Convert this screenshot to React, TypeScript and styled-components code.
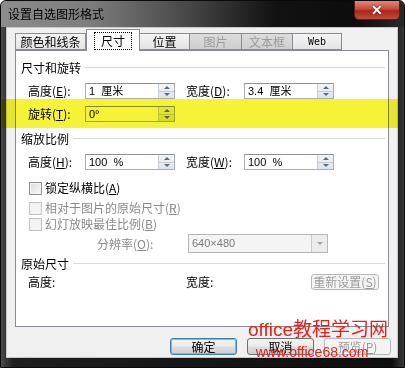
import React from "react";
import styled, { createGlobalStyle } from "styled-components";

const Global = createGlobalStyle`
  html, body { margin: 0; padding: 0; background: #fff; }
  body {
    font-family: "Noto Sans CJK SC", "Liberation Sans", sans-serif;
    font-size: 12px;
    color: #000;
  }
  #root { width: 405px; height: 368px; }
`;

const Window = styled.div`
  position: relative;
  width: 405px;
  height: 368px;
  box-sizing: border-box;
  display: flex;
  flex-direction: column;
  border: 1px solid #0a0a0a;
  border-radius: 6px 6px 0 0;
  overflow: hidden;
  background: linear-gradient(to right, #4a4a4a 0%, #1e1e1e 3%, #161616 50%, #0e0e0e 97%, #3a3a3a 100%);
`;

const TitleBar = styled.div`
  height: 26px;
  flex: none;
  display: flex;
  align-items: flex-start;
  justify-content: space-between;
  background: linear-gradient(to right, #8c8c8c 0%, #7d7d7d 22%, #4a4a4a 45%, #121212 68%, #0c0c0c 88%, #2a2a2a 100%);
`;

const Title = styled.div`
  padding: 5px 0 0 7px;
  font-size: 12px;
  line-height: 16px;
  color: #000;
`;

const CloseBtn = styled.div`
  width: 46px;
  height: 19px;
  margin-right: 4px;
  box-sizing: border-box;
  border: 1px solid #5a2020;
  border-top: none;
  border-radius: 0 0 5px 5px;
  background: linear-gradient(to bottom, #e08a7a 0%, #c74a3a 45%, #a8281c 55%, #c44a38 100%);
  display: flex;
  align-items: center;
  justify-content: center;
  color: #fff;
  font-family: "Liberation Sans", sans-serif;
  font-weight: bold;
  font-size: 14px;
  text-shadow: 0 0 2px #400;
`;

const Client = styled.div`
  margin: 0 6px 0 5px;
  height: 331px;
  flex: none;
  box-sizing: border-box;
  border: 1px solid #c8c8c8;
  background: #f0f0f0;
  display: flex;
  flex-direction: column;
`;

const TabRow = styled.div`
  height: 22px;
  flex: none;
  display: flex;
  align-items: flex-end;
  padding-left: 8px;
  position: relative;
  z-index: 2;
`;

const Tab = styled.div<{ $w: number; $active?: boolean; $disabled?: boolean }>`
  width: ${(p) => p.$w}px;
  height: ${(p) => (p.$active ? 22 : 17)}px;
  margin-bottom: ${(p) => (p.$active ? -1 : 0)}px;
  box-sizing: border-box;
  border: 1px solid #898c95;
  border-bottom: ${(p) => (p.$active ? "none" : "1px solid #898c95")};
  border-left: ${(p) => (p.$active ? "1px solid #898c95" : "none")};
  background: ${(p) =>
    p.$active
      ? "#fff"
      : p.$disabled
      ? "linear-gradient(to bottom, #dcdcdc, #cfcfcf)"
      : "linear-gradient(to bottom, #f4f4f4, #e4e4e4)"};
  color: ${(p) => (p.$disabled ? "#9a9a9a" : "#000")};
  display: flex;
  align-items: center;
  justify-content: center;
  font-size: 12px;
  line-height: 14px;
  &:first-child { border-left: 1px solid #898c95; }
`;

const Focus = styled.span`
  outline: 1px dotted #000;
  outline-offset: 1px;
  padding: 0 5px;
`;

const WebText = styled.span`
  font-family: "DejaVu Sans Mono", monospace;
  font-size: 10px;
`;

const Panel = styled.div`
  margin: 0 8px;
  height: 277px;
  flex: none;
  box-sizing: border-box;
  border: 1px solid #898c95;
  background: #fff;
  display: flex;
  flex-direction: column;
  padding-top: 9px;
  position: relative;
  z-index: 1;
`;

const Section = styled.div<{ $mt?: number }>`
  height: 14px;
  margin-top: ${(p) => p.$mt ?? 0}px;
  display: flex;
  align-items: center;
  gap: 4px;
  padding: 0 3px 0 5px;
  font-size: 12px;
  &::after {
    content: "";
    flex: 1;
    height: 1px;
    background: #d5dce3;
  }
`;

const Row = styled.div<{ $mt: number; $h: number; $pl?: number }>`
  height: ${(p) => p.$h}px;
  margin-top: ${(p) => p.$mt}px;
  padding-left: ${(p) => p.$pl ?? 12}px;
  display: flex;
  align-items: center;
`;

const Label = styled.div<{ $w: number; $ml?: number; $disabled?: boolean }>`
  width: ${(p) => p.$w}px;
  margin-left: ${(p) => p.$ml ?? 0}px;
  flex: none;
  font-size: 12px;
  line-height: 14px;
  white-space: nowrap;
  color: ${(p) => (p.$disabled ? "#8a8a8a" : "#000")};
`;

const SpinBox = styled.div`
  width: 90px;
  height: 16px;
  flex: none;
  box-sizing: border-box;
  border: 1px solid #abadb3;
  border-top-color: #8e9298;
  background: #fff;
  display: flex;
  align-items: stretch;
`;

const SpinText = styled.div`
  flex: 1;
  padding-left: 3px;
  font-size: 11px;
  line-height: 14px;
  font-family: "Liberation Sans", "Noto Sans CJK SC", sans-serif;
  white-space: pre;
`;

const SpinBtns = styled.div`
  width: 15px;
  flex: none;
  display: flex;
  flex-direction: column;
  border-left: 1px solid #c5cdd6;
  background: linear-gradient(to bottom, #f2f5f8, #dde4ec);
`;

const SpinHalf = styled.div<{ $down?: boolean }>`
  flex: 1;
  display: flex;
  align-items: center;
  justify-content: center;
  border-bottom: ${(p) => (p.$down ? "none" : "1px solid #c5cdd6")};
  &::before {
    content: "";
    width: 0;
    height: 0;
    border-left: 3px solid transparent;
    border-right: 3px solid transparent;
    ${(p) => (p.$down ? "border-top: 3px solid #5a6a7c;" : "border-bottom: 3px solid #5a6a7c;")}
  }
`;

const Spin: React.FC<{ value: string }> = ({ value }) => (
  <SpinBox>
    <SpinText>{value}</SpinText>
    <SpinBtns>
      <SpinHalf />
      <SpinHalf $down />
    </SpinBtns>
  </SpinBox>
);

const Check = styled.div<{ $disabled?: boolean }>`
  width: 13px;
  height: 13px;
  flex: none;
  box-sizing: border-box;
  border: 1px solid ${(p) => (p.$disabled ? "#c4c4c4" : "#8e8f8f")};
  background: ${(p) =>
    p.$disabled ? "#f4f4f4" : "linear-gradient(135deg, #dcdcdc, #f8f8f8)"};
  box-shadow: inset 0 0 0 1px ${(p) => (p.$disabled ? "#f0f0f0" : "#f4f4f4")};
  margin-right: 3px;
`;

const Dropdown = styled.div`
  width: 140px;
  height: 19px;
  flex: none;
  box-sizing: border-box;
  border: 1px solid #b5b8bb;
  background: #f4f4f4;
  display: flex;
  align-items: stretch;
`;

const DropText = styled.div`
  flex: 1;
  padding-left: 3px;
  color: #7a7a7a;
  font-size: 11px;
  line-height: 17px;
  font-family: "Liberation Sans", "Noto Sans CJK SC", sans-serif;
`;

const DropArrow = styled.div`
  width: 15px;
  border-left: 1px solid #c8cacc;
  background: #ececec;
  display: flex;
  align-items: center;
  justify-content: center;
  &::before {
    content: "";
    border-left: 3px solid transparent;
    border-right: 3px solid transparent;
    border-top: 3px solid #a0a0a0;
  }
`;

const SmallBtn = styled.div`
  width: 68px;
  height: 16px;
  margin-left: 67px;
  box-sizing: border-box;
  border: 1px solid #b5b8bb;
  border-radius: 3px;
  background: #f4f4f4;
  color: #9a9a9a;
  display: flex;
  align-items: center;
  justify-content: center;
  font-size: 12px;
  line-height: 14px;
`;

const ButtonRow = styled.div`
  margin-top: 11px;
  height: 17px;
  display: flex;
  justify-content: flex-end;
  gap: 10px;
  padding-right: 6px;
`;

const Button = styled.div<{ $default?: boolean; $disabled?: boolean }>`
  width: 67px;
  height: 17px;
  box-sizing: border-box;
  border-radius: 3px;
  border: 1px solid ${(p) => (p.$default ? "#3c7fb1" : p.$disabled ? "#b5b8bb" : "#707070")};
  background: ${(p) =>
    p.$disabled
      ? "#f4f4f4"
      : "linear-gradient(to bottom, #f2f2f2 0%, #ebebeb 48%, #dddddd 52%, #cfcfcf 100%)"};
  box-shadow: ${(p) => (p.$default ? "inset 0 0 0 1px #48d0f8" : "none")};
  color: ${(p) => (p.$disabled ? "#9a9a9a" : "#000")};
  display: flex;
  align-items: center;
  justify-content: center;
  font-size: 12px;
  line-height: 14px;
`;

const Highlight = styled.div`
  position: absolute;
  left: 0;
  top: 98px;
  width: 398px;
  height: 29px;
  background: #f6f236;
  mix-blend-mode: multiply;
  z-index: 5;
  pointer-events: none;
`;

const Watermark = styled.div`
  position: absolute;
  left: 247px;
  top: 318px;
  z-index: 6;
  color: #e3221c;
  display: flex;
  flex-direction: column;
  align-items: center;
  pointer-events: none;
`;

const WmBig = styled.div`
  font-size: 19px;
  line-height: 22px;
  font-family: "Liberation Sans", "Noto Sans CJK SC", sans-serif;
  white-space: nowrap;
`;

const WmSmall = styled.div`
  font-size: 14px;
  line-height: 16px;
  font-family: "Liberation Sans", sans-serif;
  white-space: nowrap;
  margin-top: 3px;
  margin-right: 12px;
`;

export default function App() {
  return (
    <>
      <Global />
      <Window>
        <TitleBar>
          <Title>设置自选图形格式</Title>
          <CloseBtn>✕</CloseBtn>
        </TitleBar>
        <Client>
          <TabRow>
            <Tab $w={71}>颜色和线条</Tab>
            <Tab $w={54} $active>
              <Focus>尺寸</Focus>
            </Tab>
            <Tab $w={50}>位置</Tab>
            <Tab $w={52} $disabled>图片</Tab>
            <Tab $w={51} $disabled>文本框</Tab>
            <Tab $w={49}>
              <WebText>Web</WebText>
            </Tab>
          </TabRow>
          <Panel>
            <Section>尺寸和旋转</Section>
            <Row $mt={9} $h={16}>
              <Label $w={57}>高度(<u>E</u>):</Label>
              <Spin value="1  厘米" />
              <Label $w={58} $ml={11}>宽度(<u>D</u>):</Label>
              <Spin value="3.4  厘米" />
            </Row>
            <Row $mt={7} $h={16}>
              <Label $w={57}>旋转(<u>T</u>):</Label>
              <Spin value="0°" />
            </Row>
            <Section $mt={9}>缩放比例</Section>
            <Row $mt={9} $h={16}>
              <Label $w={57}>高度(<u>H</u>):</Label>
              <Spin value="100  %" />
              <Label $w={58} $ml={11}>宽度(<u>W</u>):</Label>
              <Spin value="100  %" />
            </Row>
            <Row $mt={11} $h={14} $pl={13}>
              <Check />
              <Label $w={200}>锁定纵横比(<u>A</u>)</Label>
            </Row>
            <Row $mt={6} $h={14} $pl={13}>
              <Check $disabled />
              <Label $w={200} $disabled>相对于图片的原始尺寸(<u>R</u>)</Label>
            </Row>
            <Row $mt={2} $h={14} $pl={13}>
              <Check $disabled />
              <Label $w={200} $disabled>幻灯放映最佳比例(<u>B</u>)</Label>
            </Row>
            <Row $mt={3} $h={19} $pl={81}>
              <Label $w={91} $disabled>分辨率(<u>O</u>):</Label>
              <Dropdown>
                <DropText>640×480</DropText>
                <DropArrow />
              </Dropdown>
            </Row>
            <Section $mt={3}>原始尺寸</Section>
            <Row $mt={4} $h={16}>
              <Label $w={158}>高度:</Label>
              <Label $w={58}>宽度:</Label>
              <SmallBtn>重新设置(<u>S</u>)</SmallBtn>
            </Row>
          </Panel>
          <ButtonRow>
            <Button $default>确定</Button>
            <Button>取消</Button>
            <Button $disabled>预览(<u>P</u>)</Button>
          </ButtonRow>
        </Client>
        <Highlight />
        <Watermark>
          <WmBig>office教程学习网</WmBig>
          <WmSmall>www.office68.com</WmSmall>
        </Watermark>
      </Window>
    </>
  );
}
